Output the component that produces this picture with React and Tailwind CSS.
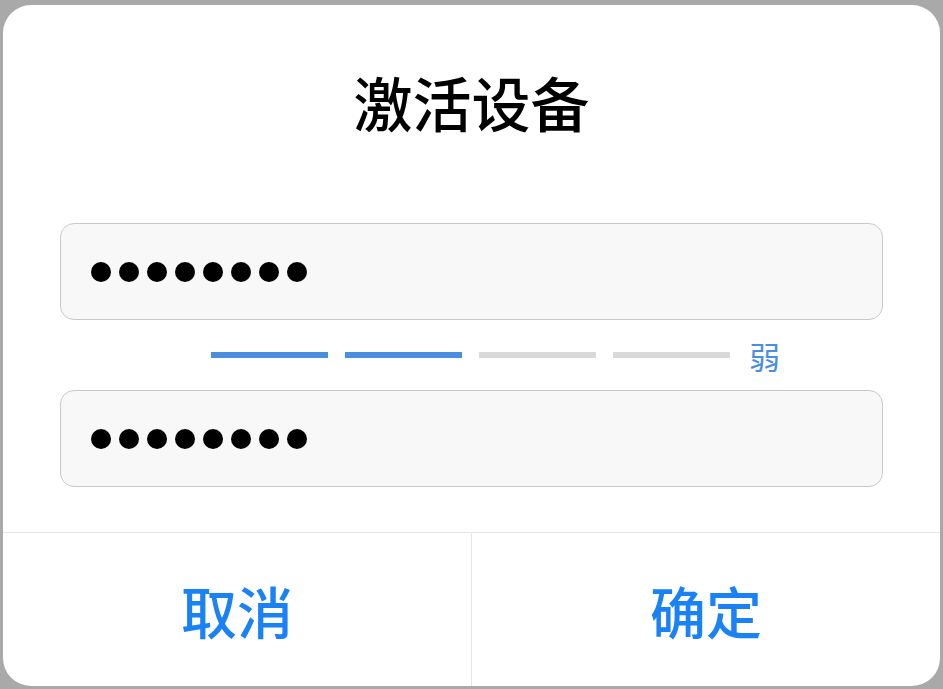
import React from 'react';

const FONT = { fontFamily: '"Noto Sans CJK SC", "Noto Sans", sans-serif' };

function Dots({ count = 8 }) {
  return (
    <div className="flex gap-[8px]">
      {Array.from({ length: count }).map((_, i) => (
        <span key={i} className="w-[20px] h-[20px] rounded-full bg-black" />
      ))}
    </div>
  );
}

function PasswordField() {
  return (
    <div className="h-[97px] rounded-[14px] border border-[#c9c9c9] bg-[#f8f8f8] flex items-center pl-[30px]">
      <Dots />
    </div>
  );
}

export default function App() {
  const levels = [true, true, false, false];

  return (
    <div className="w-full h-[689px] bg-[#a9a9a9] pt-[5px] px-[3px] pb-[3px]" style={FONT}>
      <div className="h-full bg-white rounded-[28px] flex flex-col overflow-hidden">
        {/* Title */}
        <div className="pt-[67px] text-center text-[59px] leading-none font-medium text-black">
          激活设备
        </div>

        {/* Fields */}
        <div className="px-[57px] pt-[92px]">
          <PasswordField />

          <div className="flex items-center pl-[151px] h-[70px]">
            <div className="flex gap-[17px]">
              {levels.map((on, i) => (
                <span
                  key={i}
                  className={`w-[117px] h-[6px] ${on ? 'bg-[#4a8ee0]' : 'bg-[#d9d9d9]'}`}
                />
              ))}
            </div>
            <span className="ml-[19px] text-[31px] leading-none text-[#4a8ee0]">弱</span>
          </div>

          <PasswordField />
        </div>

        {/* Buttons */}
        <div className="mt-auto h-[154px] border-t border-[#e6e6e6] flex">
          <button className="flex-1 flex items-center justify-center text-[56px] leading-none font-medium text-[#1a82f5]">
            取消
          </button>
          <div className="w-px bg-[#e6e6e6]" />
          <button className="flex-1 flex items-center justify-center text-[56px] leading-none font-medium text-[#1a82f5]">
            确定
          </button>
        </div>
      </div>
    </div>
  );
}
